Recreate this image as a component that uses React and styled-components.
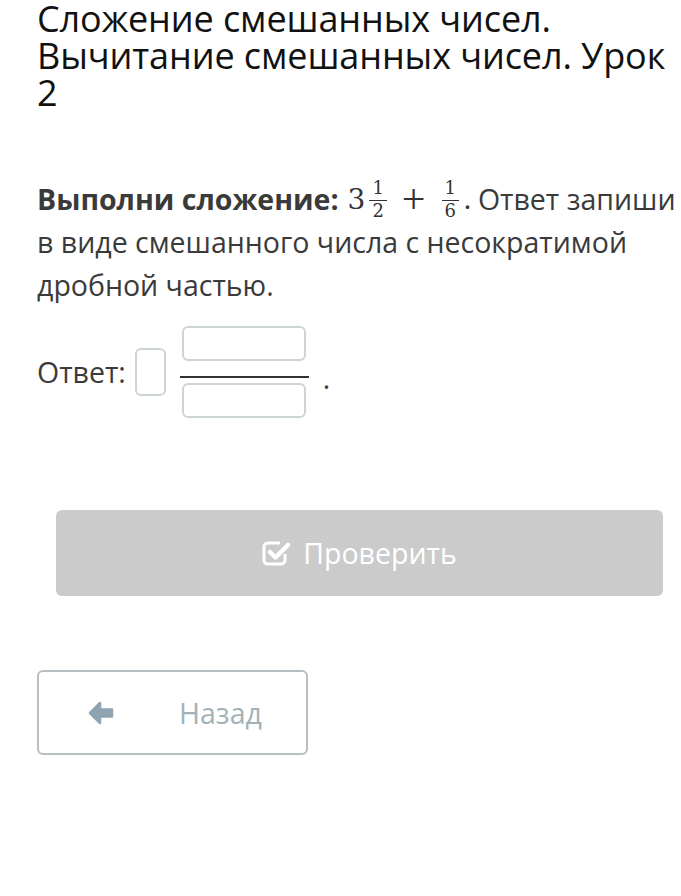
import React from "react";
import styled, { createGlobalStyle } from "styled-components";

const GlobalStyle = createGlobalStyle`
  body {
    margin: 0;
    background: #fff;
    font-family: "Open Sans", "Liberation Sans", sans-serif;
  }
`;

const Page = styled.div`
  padding: 0 0 0 37px;
  width: 681px;
  box-sizing: border-box;
`;

const Title = styled.h1`
  margin: 0;
  font-size: 36px;
  line-height: 37px;
  font-weight: 400;
  color: #111;
  letter-spacing: -0.1px;
`;

const Task = styled.p`
  margin: 67px 0 0;
  font-size: 28.5px;
  line-height: 43px;
  color: #3a3a3a;
`;

const Bold = styled.b`
  font-weight: 700;
`;

const Math = styled.span`
  font-family: "DejaVu Serif", "Liberation Serif", serif;
  font-size: 28px;
  display: inline-flex;
  align-items: center;
  vertical-align: middle;
  color: #333;
  margin: -6px 6px 0 9px;
`;

const SmallFrac = styled.span`
  display: inline-flex;
  flex-direction: column;
  align-items: center;
  font-size: 18px;
  line-height: 20px;
  margin: 0 4px 0 4px;

  & > span:first-child {
    border-bottom: 1.5px solid #333;
    padding: 0 3px 2px;
  }
`;

const Plus = styled.span`
  font-family: "Liberation Serif", serif;
  font-size: 42px;
  margin: 0 12px 0 11px;
`;

const AnswerRow = styled.div`
  display: flex;
  align-items: center;
  margin-top: 19px;
  font-size: 28.5px;
  color: #3a3a3a;
`;

const Box = styled.div`
  width: ${p => p.w}px;
  height: ${p => p.h}px;
  border: 2px solid #cdd6d4;
  border-radius: 6px;
  box-sizing: border-box;
`;

const Fraction = styled.div`
  display: flex;
  flex-direction: column;
  align-items: center;
  margin-left: 14px;
`;

const Bar = styled.div`
  width: 129px;
  height: 2px;
  margin: 15px 0 5px;
  background: #333;
`;

const Dot = styled.span`
  margin-left: 14px;
  margin-top: 12px;
`;

const Actions = styled.div`
  padding: 92px 18px 0 37px;
`;

const CheckButton = styled.button`
  margin-left: 19px;
  width: 607px;
  height: 86px;
  border: none;
  border-radius: 6px;
  background: #cbcbcb;
  color: #fff;
  font-family: inherit;
  font-size: 28.5px;
  display: flex;
  align-items: center;
  justify-content: center;
  gap: 11px;
`;

const BackButton = styled.button`
  margin-top: 74px;
  width: 271px;
  height: 85px;
  border: 2px solid #b8bfc2;
  border-radius: 6px;
  background: #fff;
  color: #a3b2b8;
  font-family: inherit;
  font-size: 28.5px;
  display: flex;
  align-items: center;
  padding: 0 0 0 48px;
  gap: 64px;
`;

const CheckIcon = () => (
  <svg width="30" height="30" viewBox="0 0 30 30" fill="none">
    <path
      d="M23 16 V22 a4 4 0 0 1 -4 4 H6 a4 4 0 0 1 -4 -4 V9 a4 4 0 0 1 4 -4 H18"
      stroke="#fff"
      strokeWidth="3"
    />
    <path d="M8 14 L13.5 19.5 L26 7" stroke="#fff" strokeWidth="4.5" strokeLinecap="round" strokeLinejoin="round" />
  </svg>
);

const ArrowIcon = () => (
  <svg width="28" height="26" viewBox="0 0 28 26">
    <path
      d="M3 13 L13 3 L13 9.5 L25 9.5 L25 16.5 L13 16.5 L13 23 Z"
      fill="#8fa3b0"
      stroke="#8fa3b0"
      strokeWidth="2.5"
      strokeLinejoin="round"
    />
  </svg>
);

export default function App() {
  return (
    <>
      <GlobalStyle />
      <Page>
        <Title>
          Сложение смешанных чисел. Вычитание смешанных чисел. Урок 2
        </Title>
        <Task>
          <Bold>Выполни сложение:</Bold>
          <Math>
            3
            <SmallFrac>
              <span>1</span>
              <span>2</span>
            </SmallFrac>
            <Plus>+</Plus>
            <SmallFrac>
              <span>1</span>
              <span>6</span>
            </SmallFrac>
            .
          </Math>
          Ответ запиши в виде смешанного числа с несократимой дробной частью.
        </Task>
        <AnswerRow>
          Ответ:
          <Box w={31} h={48} style={{ marginLeft: 9 }} />
          <Fraction>
            <Box w={124} h={35} />
            <Bar />
            <Box w={124} h={35} />
          </Fraction>
          <Dot>.</Dot>
        </AnswerRow>
      </Page>
      <Actions>
        <CheckButton>
          <CheckIcon />
          Проверить
        </CheckButton>
        <BackButton>
          <ArrowIcon />
          Назад
        </BackButton>
      </Actions>
    </>
  );
}
